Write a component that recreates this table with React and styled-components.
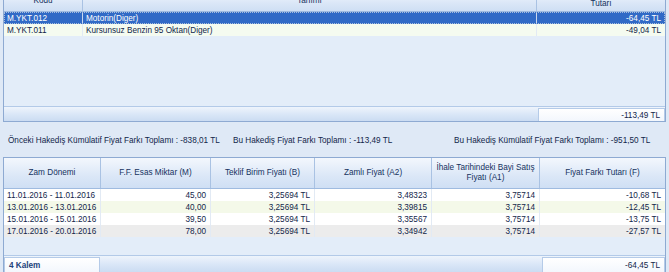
import React from "react";
import styled, { createGlobalStyle } from "styled-components";

const GlobalStyle = createGlobalStyle`
  html, body {
    margin: 0;
    padding: 0;
    background: #dfe9f6;
  }
  body {
    font-family: "Liberation Sans", Arial, sans-serif;
    font-size: 8.2px;
    color: #12264a;
  }
`;

const Screen = styled.div`
  width: 669px;
  height: 272px;
  overflow: hidden;
  box-sizing: border-box;
  padding: 0 3px 0 3px;
  background: #dfe9f6;
  display: flex;
  flex-direction: column;
`;

const Grid = styled.div`
  display: flex;
  flex-direction: column;
  border: 1px solid #8eaad2;
  background: #e3edf9;
  height: ${(p) => p.h}px;
  margin-top: ${(p) => p.top || 0}px;
  box-sizing: border-box;
  overflow: hidden;
  flex-shrink: 0;
`;

const HeaderRow = styled.div`
  display: grid;
  grid-template-columns: ${(p) => p.cols};
  height: ${(p) => p.h}px;
  flex-shrink: 0;
  border-bottom: 1px solid #9fbbe0;
  background: linear-gradient(#f3f7fd, #dbe7f7 60%, #cfdff4);
`;

const HeadCell = styled.div`
  display: flex;
  align-items: ${(p) => (p.low ? "flex-end" : "center")};
  padding-bottom: ${(p) => (p.low ? 2 : 0)}px;
  justify-content: center;
  text-align: center;
  line-height: 10px;
  padding-left: 4px;
  padding-right: 4px;
  border-right: 1px solid #a9c2e3;
  color: #15325e;
  &:last-child {
    border-right: none;
  }
`;

const Row = styled.div`
  display: grid;
  grid-template-columns: ${(p) => p.cols};
  height: ${(p) => p.h}px;
  flex-shrink: 0;
  background: ${(p) => p.bg};
  color: ${(p) => (p.selected ? "#ffffff" : "#12264a")};
  outline: ${(p) => (p.selected ? "1px dotted #a8bedd" : "none")};
  outline-offset: -1px;
`;

const Cell = styled.div`
  display: flex;
  align-items: center;
  justify-content: ${(p) => (p.right ? "flex-end" : "flex-start")};
  padding: 0 4px 0 3px;
  white-space: nowrap;
  overflow: hidden;
  border-right: 1px solid ${(p) => (p.selected ? "#c9d7ee" : "#e2eaf4")};
  &:last-child {
    border-right: none;
  }
`;

const Filler = styled.div`
  flex: 1;
`;

const Footer = styled.div`
  display: flex;
  justify-content: space-between;
  align-items: stretch;
  height: ${(p) => p.h}px;
  flex-shrink: 0;
  border-top: 1px solid #b3cae8;
  background: linear-gradient(#eef4fc, #d9e6f7 55%, #cbdcf2);
  padding: 1px 0 0 0;
  box-sizing: border-box;
`;

const SumBox = styled.div`
  width: ${(p) => p.w}px;
  box-sizing: border-box;
  display: flex;
  align-items: center;
  justify-content: ${(p) => (p.left ? "flex-start" : "flex-end")};
  padding: 0 4px;
  border: 1px solid #b5cbe8;
  border-bottom: none;
  background: linear-gradient(#ffffff, #f3f7fd);
  color: ${(p) => (p.left ? "#23427a" : "#12264a")};
  font-weight: ${(p) => (p.left ? "bold" : "normal")};
`;

const InfoLine = styled.div`
  display: grid;
  grid-template-columns: 225px 221px 1fr;
  align-items: center;
  height: 35px;
  flex-shrink: 0;
  padding-left: 5px;
  padding-top: 2px;
  box-sizing: border-box;
  color: #12264a;
  white-space: nowrap;
`;

const topCols = "79px 454px 1fr";
const bottomCols = "97px 110px 104px 117px 108px 1fr";

const topRows = [
  { kod: "M.YKT.012", tanim: "Motorin(Diger)", tutar: "-64,45 TL", selected: true },
  { kod: "M.YKT.011", tanim: "Kursunsuz Benzin 95 Oktan(Diger)", tutar: "-49,04 TL" },
];

const bottomRows = [
  ["11.01.2016 - 11.01.2016", "45,00", "3,25694 TL", "3,48323", "3,75714", "-10,68 TL"],
  ["13.01.2016 - 13.01.2016", "40,00", "3,25694 TL", "3,39815", "3,75714", "-12,45 TL"],
  ["15.01.2016 - 15.01.2016", "39,50", "3,25694 TL", "3,35567", "3,75714", "-13,75 TL"],
  ["17.01.2016 - 20.01.2016", "78,00", "3,25694 TL", "3,34942", "3,75714", "-27,57 TL"],
];

const rowColors = ["#ffffff", "#f4f9e9", "#ffffff", "#ececec"];

export default function App() {
  return (
    <Screen>
      <GlobalStyle />
      <Grid h={132} top={-10}>
        <HeaderRow cols={topCols} h={20}>
          <HeadCell>Kodu</HeadCell>
          <HeadCell>Tanımı</HeadCell>
          <HeadCell low>Tutarı</HeadCell>
        </HeaderRow>
        {topRows.map((r) => (
          <Row
            key={r.kod}
            cols={topCols}
            h={12}
            selected={r.selected}
            bg={r.selected ? "#316ac6" : "#f5fbf0"}
          >
            <Cell selected={r.selected}>{r.kod}</Cell>
            <Cell selected={r.selected}>{r.tanim}</Cell>
            <Cell selected={r.selected} right>
              {r.tutar}
            </Cell>
          </Row>
        ))}
        <Filler />
        <Footer h={15}>
          <span />
          <SumBox w={127}>-113,49 TL</SumBox>
        </Footer>
      </Grid>

      <InfoLine>
        <span>Önceki Hakediş Kümülatif Fiyat Farkı Toplamı : -838,01 TL</span>
        <span>Bu Hakediş Fiyat Farkı Toplamı : -113,49 TL</span>
        <span>Bu Hakediş Kümülatif Fiyat Farkı Toplamı : -951,50 TL</span>
      </InfoLine>

      <Grid h={116}>
        <HeaderRow cols={bottomCols} h={30}>
          <HeadCell>Zam Dönemi</HeadCell>
          <HeadCell>F.F. Esas Miktar (M)</HeadCell>
          <HeadCell>Teklif Birim Fiyatı (B)</HeadCell>
          <HeadCell>Zamlı Fiyat (A2)</HeadCell>
          <HeadCell>İhale Tarihindeki Bayi Satış Fiyatı (A1)</HeadCell>
          <HeadCell>Fiyat Farkı Tutarı (F)</HeadCell>
        </HeaderRow>
        {bottomRows.map((r, i) => (
          <Row key={r[0]} cols={bottomCols} h={12} bg={rowColors[i]}>
            {r.map((v, j) => (
              <Cell key={j} right={j > 0}>
                {v}
              </Cell>
            ))}
          </Row>
        ))}
        <Filler />
        <Footer h={17}>
          <SumBox w={96} left>
            4 Kalem
          </SumBox>
          <SumBox w={123}>-64,45 TL</SumBox>
        </Footer>
      </Grid>
    </Screen>
  );
}
